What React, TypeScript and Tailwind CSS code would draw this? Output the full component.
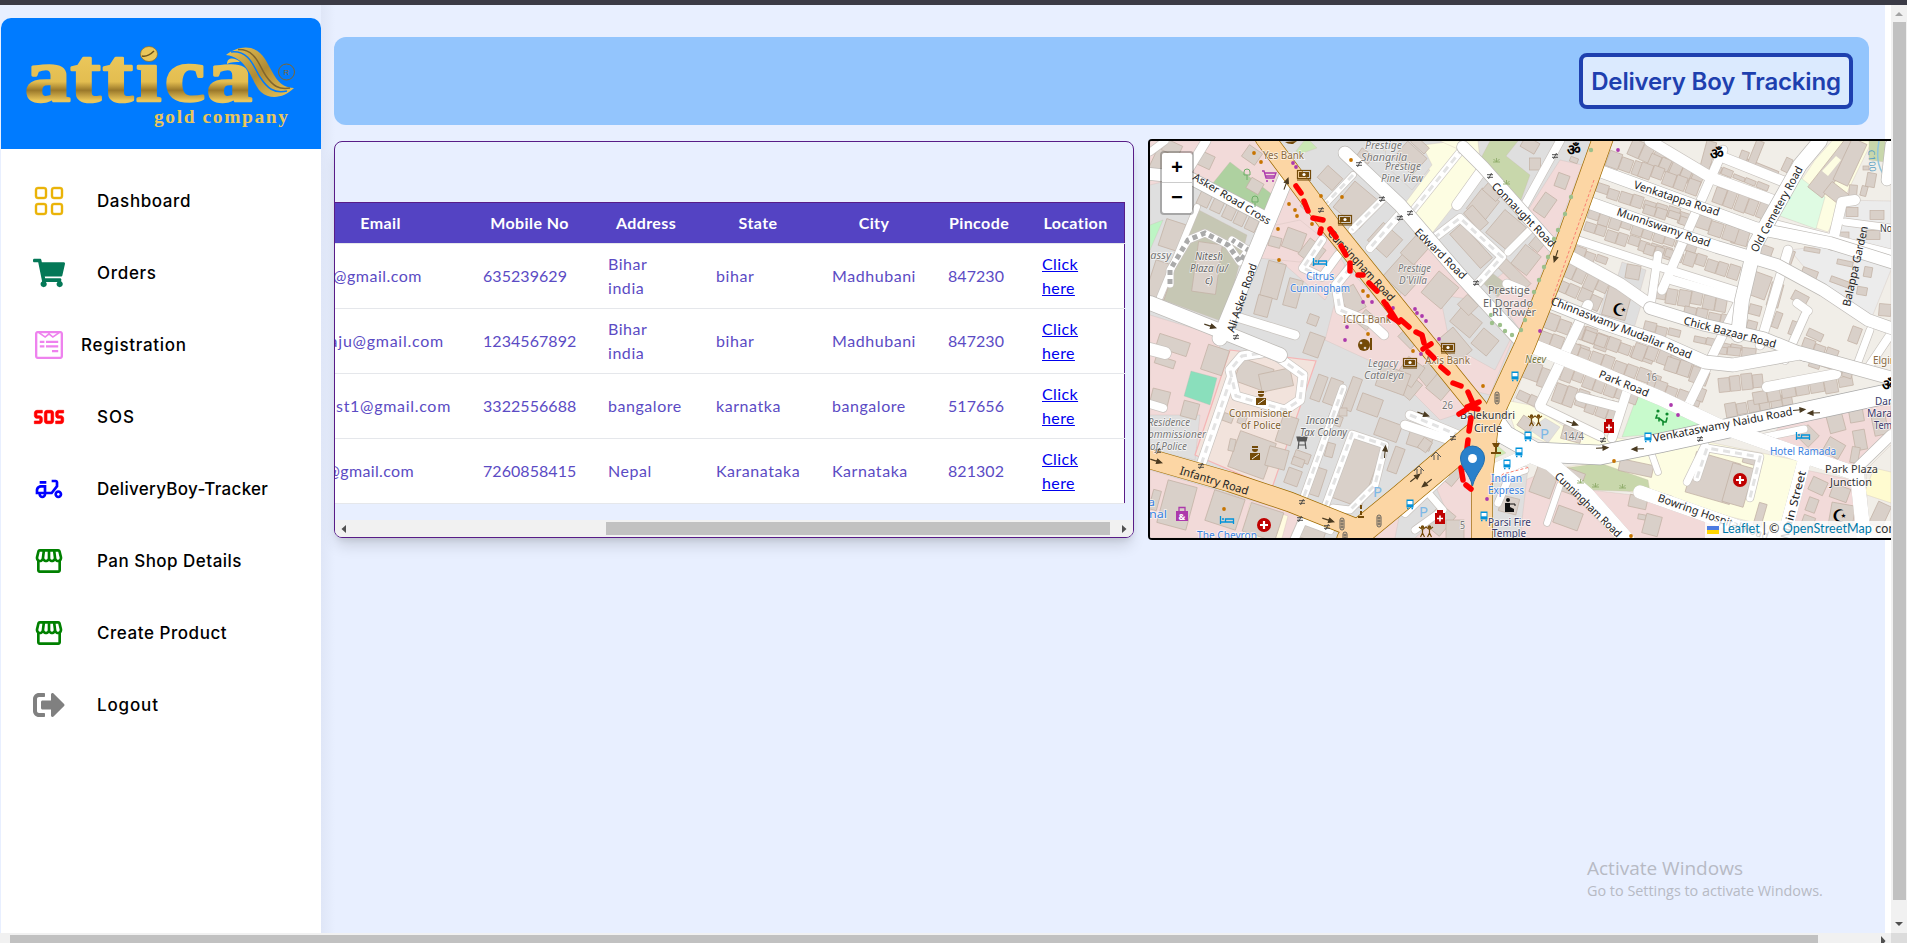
import type { ReactNode } from "react";
import { BsGrid } from "react-icons/bs";
import { FaShoppingCart, FaWpforms, FaSignOutAlt } from "react-icons/fa";
import { MdSos, MdOutlineDeliveryDining, MdOutlineStorefront } from "react-icons/md";

type Pt = [number, number];

/* ---------- Sidebar ---------- */

const menu: { label: string; icon: ReactNode; gap: string; track: string }[] = [
  { label: "Dashboard", icon: <BsGrid size={32} color="#eab308" stroke="#eab308" strokeWidth={0.2} />, gap: "gap-8", track: "tracking-[0.6px]" },
  { label: "Orders", icon: <FaShoppingCart size={32} color="#047857" />, gap: "gap-8", track: "tracking-[0.7px]" },
  { label: "Registration", icon: <FaWpforms size={32} color="violet" />, gap: "gap-4", track: "tracking-[0.7px]" },
  { label: "SOS", icon: <MdSos size={32} color="red" className="[&>path:last-child]:[stroke-width:0.5px] [&>path:last-child]:[stroke:red]" />, gap: "gap-8", track: "tracking-[1px]" },
  { label: "DeliveryBoy-Tracker", icon: <MdOutlineDeliveryDining size={32} color="blue" />, gap: "gap-8", track: "tracking-[0.3px]" },
  { label: "Pan Shop Details", icon: <MdOutlineStorefront size={32} color="green" />, gap: "gap-8", track: "tracking-[0.48px]" },
  { label: "Create Product", icon: <MdOutlineStorefront size={32} color="green" />, gap: "gap-8", track: "tracking-[0.55px]" },
  { label: "Logout", icon: <FaSignOutAlt size={32} color="gray" />, gap: "gap-8", track: "tracking-[0.85px]" },
];

function Logo() {
  return (
    <svg width="320" height="131" viewBox="1 18 320 131" className="block">
      <defs>
        <linearGradient id="gold" x1="0" y1="0" x2="0" y2="1">
          <stop offset="0.3" stopColor="#eac65a" />
          <stop offset="0.58" stopColor="#e3bd50" />
          <stop offset="0.68" stopColor="#9a782a" />
          <stop offset="0.8" stopColor="#eac65a" />
        </linearGradient>
        <linearGradient id="goldWave" x1="0" y1="0" x2="1" y2="1">
          <stop offset="0" stopColor="#eac65a" />
          <stop offset="0.5" stopColor="#b08b33" />
          <stop offset="1" stopColor="#eac65a" />
        </linearGradient>
      </defs>
      <g fontFamily="Liberation Serif, serif" fontWeight="700" fill="url(#gold)" stroke="url(#gold)" strokeWidth="2.600" strokeLinejoin="round">
        <text transform="translate(25 101) scale(1.18 1)" fontSize="77" x="0 38.500 66 94 118.500 154">attica</text>
      </g>
      <ellipse cx="149" cy="54" rx="8.500" ry="7.500" fill="#eac65a" stroke="#8a6a24" strokeWidth="0.700" />
      <path d="M142 56c5 1 9-2 12-5" stroke="#6c521b" strokeWidth="1.500" fill="none" />
      <path d="M226 55C239 45 256 44 265 59C274 74 278 88 294 88C284 98 270 100 261 92C251 82 249 58 226 55Z" fill="url(#goldWave)" />
      <path d="M231 52C250 50 254 68 260 77C267 88 274 94 287 91" fill="none" stroke="#007bff" strokeWidth="1.500" />
      <path d="M238 49.500C256 49 259 66 266 76C273 86 279 90 290 88" fill="none" stroke="#80662d" strokeWidth="1.500" />
      <path d="M227 64c0-8 9-6 13-2c-5 0-9 0-13 2Z" fill="#eac65a" />
      <circle cx="286.500" cy="72" r="8" fill="none" stroke="#80662d" />
      <text x="286.500" y="75" fontFamily="Liberation Sans, sans-serif" fontSize="8" fill="#80662d" textAnchor="middle">R</text>
      <text x="154" y="123" fontFamily="Liberation Serif, serif" fontWeight="700" fontSize="19.500" fill="#eac65a" textLength="134">gold company</text>
    </svg>
  );
}

function Sidebar() {
  return (
    <aside className="z-10 ml-px mt-[13px] flex w-80 shrink-0 flex-col overflow-hidden rounded-t-[10px] bg-white">
      <div className="h-[131px] shrink-0 bg-[#007bff]"><Logo /></div>
      <nav className="flex flex-col pt-4">
        {menu.map((m) => (
          <div key={m.label} className={"flex h-[72px] items-center pl-8 " + m.gap}>
            {m.icon}
            <span className={"whitespace-nowrap pt-[2px] font-['Inter',sans-serif] text-[17px] font-medium text-black " + m.track}>{m.label}</span>
          </div>
        ))}
      </nav>
    </aside>
  );
}

/* ---------- Table ---------- */

const cols = "grid grid-cols-[132px_125px_108px_116px_116px_94px_99px]";
const rows = [
  { email: "@gmail.com", pad: "pr-[45px] tracking-[0.5px]", cells: ["635239629", "Bihar india", "bihar", "Madhubani", "847230"] },
  { email: "aju@gmail.com", pad: "pr-[23px] tracking-[0.75px]", cells: ["1234567892", "Bihar india", "bihar", "Madhubani", "847230"] },
  { email: "st1@gmail.com", pad: "pr-4 tracking-[0.7px]", cells: ["3322556688", "bangalore", "karnatka", "bangalore", "517656"] },
  { email: "@gmail.com", pad: "pr-[53px] tracking-[0.35px]", cells: ["7260858415", "Nepal", "Karanataka", "Karnataka", "821302"] },
];

function TableCard() {
  return (
    <section className="flex h-[397px] w-[800px] shrink-0 flex-col overflow-hidden rounded-lg border border-[#581c87] pt-[60px] font-['Lato',sans-serif] text-base shadow-[0_10px_15px_-3px_rgba(0,0,0,0.14),0_4px_6px_-2px_rgba(0,0,0,0.08)]">
      <div className="w-[790px]">
        <div className={cols + " h-[41px] items-center border-r border-t border-[#581c87] bg-[#5443c3] text-center font-bold tracking-[0.4px] text-white"}>
          <span className="pr-[41px]">Email</span>
          <span>Mobile No</span>
          <span>Address</span>
          <span>State</span>
          <span>City</span>
          <span>Pincode</span>
          <span>Location</span>
        </div>
        {rows.map((r, i) => (
          <div key={i} className="border-t border-[#e5e7eb]">
            <div className={cols + " h-16 items-center border-r border-[#581c87] bg-white leading-6 text-[#5b4bc4]"}>
              <span className={"flex justify-end overflow-hidden whitespace-nowrap " + r.pad}>{r.email}</span>
              {r.cells.map((c, j) => (
                <span key={j} className={"px-4 " + (j === 0 || j === 4 ? "tracking-[0.05px]" : "tracking-[0.55px]") + (c === "Bihar india" ? " w-[72px]" : "")}>{c}</span>
              ))}
              <a className="block w-[72px] pl-4 tracking-[0.4px] text-[#0000ee] underline">Click here</a>
            </div>
          </div>
        ))}
        <div className="h-px bg-[#e5e7eb]" />
      </div>
      <div className="mt-auto flex h-[17px] items-center bg-[#f1f1f1] px-1.5">
        <svg width="5" height="8"><path d="M5 0v8L0.500 4z" fill="#505050" /></svg>
        <div className="ml-[260px] h-[13px] w-[504px] bg-[#c1c1c1]" />
        <svg width="5" height="8" className="ml-auto"><path d="M0 0v8l4.500-4z" fill="#505050" /></svg>
      </div>
    </section>
  );
}

/* ---------- Map ---------- */

const line = (pts: Pt[]) => "M" + pts.map((p) => p.join(" ")).join("L");

const areas: [string, Pt[]][] = [
  ["#dfdfdf", [[1150, 141], [1602, 141], [1500, 400], [1470, 538], [1150, 538]]],
  ["#f2dad9", [[1150, 141], [1262, 141], [1300, 190], [1266, 218], [1190, 175], [1150, 185]]],
  ["#f2dad9", [[1285, 180], [1320, 225], [1345, 265], [1325, 300], [1268, 250], [1262, 240]]],
  ["#f2dad9", [[1262, 228], [1300, 220], [1325, 240], [1300, 262], [1258, 258]]],
  ["#f2dad9", [[1345, 265], [1410, 335], [1470, 410], [1440, 420], [1390, 370], [1325, 340], [1338, 290]]],
  ["#f2dad9", [[1424, 240], [1513, 338], [1490, 395], [1470, 390], [1398, 300]]],
  ["#dfdfdf", [[1440, 295], [1475, 300], [1510, 340], [1495, 370], [1450, 345]]],
  ["#f2dad9", [[1560, 160], [1582, 165], [1520, 330], [1488, 285], [1545, 240], [1528, 210]]],
  ["#f2dad9", [[1150, 315], [1215, 335], [1230, 375], [1205, 450], [1150, 435]]],
  ["#dfdfdf", [[1150, 415], [1200, 415], [1195, 460], [1150, 450]]],
  ["#f2e3dc", [[1230, 350], [1316, 361], [1272, 488], [1195, 455]]],
  ["#f2dad9", [[1150, 470], [1300, 515], [1290, 538], [1150, 538]]],
  ["#fdfde2", [[1383, 150], [1455, 141], [1483, 168], [1430, 236], [1400, 210], [1430, 170]]],
  ["#fdfde2", [[1440, 141], [1478, 141], [1480, 160], [1460, 150]]],
  ["#dfdfdf", [[1386, 141], [1420, 141], [1432, 165], [1412, 190], [1385, 165]]],
  ["#c8d7ab", [[1490, 141], [1518, 141], [1506, 156], [1530, 175], [1521, 200], [1480, 160]]],
  ["#aed1a0", [[1230, 162], [1273, 195], [1265, 213], [1213, 183]]],
  ["#c9e8b4", [[1310, 141], [1317, 148], [1300, 154], [1296, 151], [1304, 141]]],
  ["#c6c7b4", [[1195, 208], [1247, 235], [1224, 322], [1163, 300]]],
  ["#c6c7b4", [[1483, 283], [1492, 273], [1508, 285], [1498, 297]]],
  ["#bdf5c4", [[1150, 225], [1163, 220], [1150, 250]]],
  ["#8adfbc", [[1191, 371], [1217, 378], [1210, 405], [1184, 396]]],
  ["#f1eee8", [[1612, 141], [1891, 141], [1891, 385], [1660, 435], [1600, 445], [1545, 440], [1510, 410], [1550, 300]]],
  ["#dfdfdf", [[1622, 262], [1646, 270], [1640, 292], [1616, 282]]],
  ["#dfdfdf", [[1606, 290], [1642, 302], [1634, 328], [1598, 318]]],
  ["#ececec", [[1790, 250], [1830, 245], [1840, 200], [1891, 201], [1891, 270], [1870, 322], [1823, 290]]],
  ["#fdfde2", [[1815, 160], [1832, 141], [1872, 141], [1828, 232], [1778, 215]]],
  ["#dffbe3", [[1801, 178], [1825, 197], [1816, 229], [1777, 215]]],
  ["#c8d7ab", [[1869, 141], [1885, 141], [1885, 162], [1869, 160]]],
  ["#fdfde2", [[1505, 400], [1530, 405], [1570, 430], [1630, 440], [1610, 450], [1560, 448], [1515, 430]]],
  ["#dfdfdf", [[1530, 430], [1545, 418], [1560, 427], [1548, 443]]],
  ["#c8facc", [[1637, 396], [1677, 408], [1716, 425], [1680, 432], [1622, 437]]],
  ["#fdfde2", [[1560, 468], [1663, 452], [1703, 441], [1805, 462], [1785, 530], [1640, 495]]],
  ["#c8d7ab", [[1566, 468], [1600, 463], [1648, 480], [1650, 492], [1590, 490]]],
  ["#f2dad9", [[1500, 490], [1550, 470], [1615, 538], [1495, 538]]],
  ["#dfdfdf", [[1492, 480], [1528, 468], [1520, 538], [1490, 538]]],
  ["#f2dad9", [[1590, 490], [1650, 497], [1765, 538], [1625, 538]]],
  ["#f2dad9", [[1780, 425], [1852, 400], [1891, 400], [1891, 440], [1855, 468], [1770, 440]]],
  ["#f2dad9", [[1806, 470], [1852, 480], [1860, 538], [1790, 538]]],
  ["#f1eee8", [[1866, 470], [1891, 445], [1891, 538], [1868, 538]]],
  ["#fffbd0", [[1874, 468], [1891, 472], [1891, 503], [1864, 494]]],
  ["#fffbe0", [[1250, 503], [1288, 516], [1282, 538], [1242, 538]]],
  ["#cdebb0", [[1491, 440], [1506, 453], [1491, 460]]],
  ["#f2dad9", [[1400, 500], [1470, 440], [1473, 538], [1370, 538], [1350, 535]]],
  ["#dfdfdf", [[1400, 512], [1435, 485], [1446, 510], [1415, 538], [1395, 538]]],
];

/* cx, cy, width, height, angle */
const buildings: [number, number, number, number, number][] = [
  [1205, 160, 16, 14, 25], [1252, 155, 16, 14, 35], [1160, 160, 14, 24, 25], [1172, 148, 18, 12, 25],
  [1255, 186, 14, 12, 30], [1172, 235, 20, 28, 18], [1160, 280, 20, 36, 18],
  [1205, 198, 12, 17, 25], [1218, 204, 11, 17, 25], [1230, 211, 11, 17, 25], [1241, 217, 10, 17, 25], [1252, 224, 11, 14, 25],
  [1207, 268, 24, 50, 8], [1273, 280, 18, 36, 15], [1293, 293, 14, 28, 15], [1263, 306, 14, 20, 15],
  [1294, 240, 20, 20, 20], [1312, 252, 20, 20, 38], [1275, 242, 12, 10, 15], [1310, 205, 14, 14, 40],
  [1357, 205, 34, 34, 40], [1330, 178, 20, 16, 42], [1365, 156, 14, 10, 35], [1385, 240, 26, 24, 42],
  [1313, 320, 10, 10, 20], [1314, 345, 16, 22, 20], [1352, 300, 18, 26, -30], [1366, 320, 14, 16, 40],
  [1410, 158, 26, 22, 42], [1404, 275, 30, 30, 42], [1415, 250, 18, 24, 42], [1420, 145, 18, 8, 42],
  [1483, 205, 22, 26, 38], [1476, 218, 24, 12, 48], [1493, 191, 18, 12, 42], [1506, 230, 28, 30, 40],
  [1471, 246, 46, 16, 48], [1526, 260, 20, 24, 38], [1514, 275, 36, 12, 45], [1537, 244, 12, 12, 40],
  [1440, 290, 28, 26, -50], [1466, 322, 26, 20, 40], [1468, 305, 16, 14, 45], [1485, 342, 20, 20, 40],
  [1562, 181, 12, 14, 20], [1545, 205, 14, 22, 35], [1535, 164, 11, 12, 0], [1530, 145, 16, 12, 30], [1574, 160, 8, 5, 20],
  [1412, 335, 22, 18, -45], [1430, 372, 24, 18, -40], [1407, 385, 24, 20, 40], [1441, 385, 20, 24, 40], [1455, 345, 20, 30, -40],
  [1420, 440, 24, 16, 18], [1410, 372, 20, 24, 35],
  [1173, 345, 32, 14, 18], [1165, 362, 20, 8, 18], [1215, 360, 22, 26, 18], [1160, 398, 18, 16, 14], [1190, 410, 16, 16, 15],
  [1254, 375, 34, 24, 20], [1276, 380, 32, 18, -12], [1287, 430, 16, 28, 18], [1252, 455, 38, 38, 20], [1277, 458, 20, 20, 15], [1232, 445, 6, 12, 12], [1228, 418, 10, 8, 20], [1242, 420, 8, 8, 20],
  [1319, 388, 10, 26, 20], [1333, 392, 13, 26, 20], [1352, 394, 10, 34, 20], [1343, 412, 8, 8, 0], [1302, 457, 16, 10, 20], [1330, 450, 8, 14, 15], [1293, 477, 14, 16, 20], [1318, 482, 10, 28, 18], [1298, 462, 12, 8, 20], [1335, 420, 14, 10, 20],
  [1356, 472, 34, 64, 20], [1370, 405, 22, 18, 20], [1388, 430, 24, 18, 20], [1393, 380, 30, 22, 20], [1396, 460, 10, 26, 20],
  [1177, 505, 30, 44, 15], [1225, 510, 32, 32, 18], [1263, 522, 34, 30, 18], [1155, 500, 8, 20, 15], [1310, 532, 30, 16, 18],
  [1455, 470, 16, 30, 40], [1440, 520, 20, 26, 40], [1425, 445, 10, 12, 35], [1455, 530, 18, 20, 0],
  [1544, 482, 22, 28, 20], [1572, 482, 20, 24, 20], [1568, 518, 26, 18, 20], [1509, 505, 18, 16, 14], [1526, 424, 14, 12, 35], [1572, 434, 20, 14, 15],
  [1636, 468, 34, 12, 12], [1638, 502, 18, 12, 12], [1642, 517, 8, 5, 10], [1652, 525, 16, 20, 15],
  [1713, 478, 46, 42, 16], [1738, 485, 22, 40, 16], [1760, 515, 8, 24, 16], [1750, 460, 14, 8, 15],
  [1818, 486, 16, 14, 25], [1840, 493, 18, 14, 20], [1812, 505, 10, 14, 20], [1842, 515, 24, 22, 10], [1808, 522, 12, 12, 20], [1880, 515, 14, 24, 25],
  [1808, 436, 16, 16, 45], [1836, 423, 16, 18, -15], [1856, 413, 14, 18, -10], [1834, 448, 18, 16, 30], [1860, 440, 12, 20, -10], [1855, 455, 8, 16, 10], [1880, 425, 14, 20, -12],
  [1834, 168, 18, 62, 38], [1850, 162, 16, 46, 25], [1838, 195, 26, 14, 38], [1853, 191, 8, 12, 5], [1864, 191, 6, 10, 15], [1871, 180, 9, 14, 10], [1866, 168, 6, 4, 0],
  [1762, 168, 34, 6, 22], [1755, 155, 8, 30, 22], [1787, 165, 7, 14, 25], [1744, 156, 8, 10, 20],
  [1758, 285, 22, 24, 20], [1775, 295, 12, 24, 15], [1741, 235, 16, 20, 15], [1766, 252, 12, 12, 20], [1789, 258, 8, 16, 20],
  [1809, 275, 16, 12, 20], [1812, 250, 16, 4, 10], [1840, 282, 20, 6, 20], [1852, 212, 12, 9, 0], [1877, 215, 14, 9, 0], [1843, 236, 12, 8, 0], [1873, 235, 14, 9, 0], [1862, 291, 10, 8, 10], [1845, 263, 16, 5, 12], [1868, 272, 8, 10, 10], [1885, 310, 12, 12, 5],
  [1800, 298, 16, 10, 28], [1755, 310, 12, 10, 15], [1752, 325, 10, 8, 15], [1777, 320, 7, 16, 20], [1793, 328, 6, 14, 20], [1815, 335, 16, 8, 25], [1855, 335, 10, 16, 20],
  [1617, 303, 24, 30, 15], [1633, 272, 14, 14, 10], [1708, 156, 10, 30, 15],
];

/* Runs of adjoining houses: start, step angle, count, size */
const terraces: { x: number; y: number; a: number; n: number; w: number; h: number }[] = [
  { x: 1614, y: 160, a: 20, n: 3, w: 13, h: 16 }, { x: 1636, y: 148, a: 24, n: 6, w: 12, h: 18 }, { x: 1655, y: 160, a: 24, n: 5, w: 11, h: 14 },
  { x: 1602, y: 190, a: 18, n: 8, w: 12, h: 12 }, { x: 1646, y: 170, a: 20, n: 5, w: 12, h: 15 }, { x: 1650, y: 209, a: 18, n: 4, w: 12, h: 10 },
  { x: 1594, y: 214, a: 18, n: 10, w: 11, h: 15 }, { x: 1590, y: 228, a: 18, n: 9, w: 11, h: 12 }, { x: 1650, y: 248, a: 18, n: 3, w: 10, h: 10 },
  { x: 1580, y: 252, a: 20, n: 3, w: 11, h: 10 }, { x: 1569, y: 270, a: 24, n: 4, w: 12, h: 18 }, { x: 1562, y: 286, a: 24, n: 4, w: 12, h: 14 },
  { x: 1552, y: 322, a: 20, n: 5, w: 13, h: 16 }, { x: 1545, y: 337, a: 20, n: 4, w: 13, h: 12 }, { x: 1590, y: 336, a: 20, n: 6, w: 12, h: 13 },
  { x: 1573, y: 350, a: 20, n: 8, w: 12, h: 14 }, { x: 1568, y: 372, a: 20, n: 7, w: 11, h: 18 }, { x: 1560, y: 392, a: 20, n: 6, w: 11, h: 20 },
  { x: 1532, y: 372, a: 20, n: 2, w: 16, h: 20 }, { x: 1523, y: 397, a: 25, n: 2, w: 12, h: 12 }, { x: 1640, y: 350, a: 20, n: 5, w: 12, h: 16 },
  { x: 1660, y: 388, a: 20, n: 4, w: 12, h: 14 }, { x: 1672, y: 365, a: 18, n: 3, w: 13, h: 16 },
  { x: 1700, y: 394, a: 20, n: 1, w: 10, h: 16 }, { x: 1703, y: 378, a: 20, n: 1, w: 10, h: 14 },
  { x: 1716, y: 168, a: 22, n: 5, w: 12, h: 7 }, { x: 1720, y: 195, a: 20, n: 5, w: 11, h: 18 }, { x: 1703, y: 224, a: 18, n: 3, w: 14, h: 16 },
  { x: 1690, y: 258, a: 18, n: 5, w: 11, h: 14 }, { x: 1686, y: 277, a: 16, n: 5, w: 12, h: 9 }, { x: 1660, y: 293, a: 10, n: 6, w: 12, h: 16 },
  { x: 1690, y: 312, a: 12, n: 4, w: 12, h: 12 }, { x: 1776, y: 232, a: 14, n: 5, w: 9, h: 5 }, { x: 1650, y: 327, a: 14, n: 3, w: 12, h: 10 }, { x: 1700, y: 340, a: 12, n: 4, w: 12, h: 8 },
  { x: 1720, y: 350, a: 6, n: 3, w: 14, h: 10 }, { x: 1731, y: 410, a: -10, n: 6, w: 11, h: 14 }, { x: 1760, y: 397, a: -10, n: 7, w: 14, h: 13 },
  { x: 1724, y: 384, a: -6, n: 4, w: 11, h: 16 }, { x: 1808, y: 346, a: 20, n: 3, w: 12, h: 14 }, { x: 1815, y: 363, a: 18, n: 4, w: 11, h: 8 },
];

const minor: [number, Pt[]][] = [
  [6, [[1160, 297], [1197, 207]]], [9, [[1187, 172], [1206, 141]]], [7, [[1150, 152], [1165, 141]]],
  [6, [[1353, 175], [1318, 212]]], [7, [[1387, 195], [1352, 230]]], [8, [[1400, 214], [1370, 248]]],
  [7, [[1463, 148], [1411, 213]]], [10, [[1482, 170], [1457, 205]]], [8, [[1560, 141], [1522, 210]]],
  [8, [[1434, 238], [1460, 218], [1502, 257], [1474, 288]]], [7, [[1530, 230], [1508, 252]]], [9, [[1507, 284], [1522, 290]]],
  [8, [[1322, 240], [1303, 268], [1322, 277], [1338, 255]]], [9, [[1350, 268], [1336, 285], [1340, 310], [1370, 322], [1384, 335]]],
  [9, [[1240, 318], [1295, 335]]], [7, [[1170, 284], [1170, 270], [1188, 240], [1205, 233], [1228, 245], [1240, 262], [1248, 250], [1232, 240]]],
  [9, [[1225, 335], [1278, 357], [1303, 375], [1300, 400], [1285, 410], [1236, 396], [1230, 370], [1242, 356], [1262, 353]]],
  [9, [[1231, 378], [1201, 465]]], [7, [[1343, 388], [1302, 502]]], [7, [[1325, 507], [1352, 434], [1385, 445], [1375, 485], [1350, 510], [1333, 508]]],
  [12, [[1150, 349], [1165, 353]]], [8, [[1150, 404], [1163, 408]]], [9, [[1410, 415], [1470, 440]]], [9, [[1405, 425], [1450, 440]]],
  [8, [[1405, 513], [1445, 475]]], [8, [[1295, 538], [1303, 520], [1330, 530]]], [7, [[1430, 495], [1443, 510], [1415, 530]]],
  [8, [[1577, 240], [1660, 267], [1740, 292]]], [12, [[1567, 255], [1620, 284], [1650, 305]]], [9, [[1723, 150], [1662, 290]]],
  [8, [[1658, 255], [1650, 310]]], [9, [[1672, 280], [1742, 300]]], [11, [[1650, 141], [1712, 178], [1772, 200]]], [10, [[1717, 155], [1790, 184]]],
  [10, [[1855, 200], [1842, 202], [1832, 245]]], [9, [[1765, 222], [1891, 254]]], [7, [[1845, 222], [1891, 228]]], [8, [[1797, 303], [1808, 311]]],
  [9, [[1788, 250], [1760, 345]]], [8, [[1805, 315], [1785, 360]]], [9, [[1742, 295], [1685, 412]]], [7, [[1870, 330], [1855, 370]]], [8, [[1890, 335], [1870, 365]]],
  [10, [[1588, 305], [1540, 405]]], [9, [[1540, 407], [1600, 436]]], [9, [[1628, 388], [1612, 438]]], [9, [[1580, 397], [1618, 407]]],
  [10, [[1767, 387], [1836, 374]]], [7, [[1705, 445], [1687, 482]]], [7, [[1697, 478], [1707, 448], [1760, 457], [1750, 498]]],
  [6, [[1658, 472], [1652, 455]]], [6, [[1560, 485], [1547, 523]]], [7, [[1498, 503], [1510, 475], [1525, 470]]], [7, [[1765, 437], [1804, 429]]], [8, [[1645, 493], [1670, 500]]],
];

const streets: [number, Pt[]][] = [
  [14, [[1150, 303], [1228, 334], [1280, 355]]], [15, [[1290, 168], [1220, 338]]], [12, [[1150, 174], [1190, 178], [1270, 220]]],
  [13, [[1345, 153], [1400, 205], [1460, 275], [1518, 338]]], [12, [[1463, 147], [1483, 167], [1553, 246]]],
  [12, [[1597, 170], [1660, 193], [1755, 228], [1830, 243], [1891, 262]]], [12, [[1587, 202], [1660, 228], [1717, 247], [1777, 265], [1823, 290], [1868, 320], [1891, 328]]],
  [13, [[1550, 302], [1600, 322], [1660, 342], [1705, 362], [1733, 365], [1800, 353], [1891, 378]]], [12, [[1650, 308], [1705, 325], [1763, 338], [1805, 355]]],
  [14, [[1820, 141], [1800, 165], [1755, 245], [1742, 300], [1738, 335]]], [13, [[1530, 345], [1600, 373], [1660, 398], [1717, 425], [1810, 458], [1857, 474], [1864, 538]]],
  [14, [[1497, 470], [1530, 455], [1550, 463], [1587, 495], [1627, 540]]], [12, [[1640, 492], [1770, 538]]], [12, [[1804, 462], [1783, 540]]], [10, [[1855, 470], [1891, 435]]],
  [11, [[1891, 145], [1887, 180]]],
];

const naidu: Pt[] = [[1490, 415], [1505, 435], [1535, 452], [1600, 455], [1660, 443], [1891, 393]];

const arterials: [number, Pt[]][] = [
  [19, [[1265, 138], [1330, 225], [1393, 303], [1478, 408]]],
  [19, [[1150, 459], [1230, 482], [1290, 502], [1355, 528]]],
  [26, [[1350, 540], [1400, 499], [1482, 430]]],
  [20, [[1603, 138], [1565, 245], [1525, 345], [1488, 425], [1482, 480], [1482, 540]]],
];

/* start, end, caption, font size */
const roadNames: [number, number, number, number, string, number][] = [
  [1192, 179, 1268, 225, "Asker Road Cross", 10.500], [1234, 333, 1257, 265, "Ali Asker Road", 11], [1327, 234, 1390, 302, "Cunningham Road", 11],
  [1491, 187, 1551, 248, "Connaught Road", 11], [1414, 233, 1462, 280, "Edward Road", 11], [1550, 304, 1690, 359, "Chinnaswamy Mudaliar Road", 11],
  [1633, 188, 1718, 216, "Venkatappa Road", 11], [1616, 215, 1709, 247, "Munniswamy Road", 11], [1683, 324, 1775, 348, "Chick Bazaar Road", 11],
  [1757, 253, 1803, 169, "Old Cemetery Road", 11], [1850, 307, 1868, 227, "Balappa Garden", 11], [1598, 377, 1647, 397, "Park Road", 11],
  [1654, 442, 1793, 415, "Venkataswamy Naidu Road", 11], [1179, 474, 1247, 495, "Infantry Road", 11.500], [1554, 477, 1617, 538, "Cunningham Road", 11],
  [1657, 501, 1767, 540, "Bowring Hospital Road", 11], [1788, 540, 1806, 472, "Main Street", 11],
];

/* x, baseline, width, caption, colour, italic */
const places: [number, number, number, string, string, boolean][] = [
  [1263, 159, 41, "Yes Bank", "#8a6a3f", false], [1365, 149, 37, "Prestige", "#777", true], [1361, 161, 46, "Shangrila", "#777", true],
  [1385, 170, 36, "Prestige", "#777", true], [1381, 182, 42, "Pine View", "#777", true], [1195, 260, 28, "Nitesh", "#666", true], [1190, 272, 38, "Plaza (u/", "#666", true], [1205, 284, 8, "c)", "#666", true],
  [1144, 259, 27, "bassy", "#777", true], [1306, 280, 28, "Citrus", "#3b82e0", false], [1290, 292, 60, "Cunningham", "#3b82e0", false], [1343, 323, 48, "ICICI Bank", "#8a6a3f", false],
  [1398, 272, 33, "Prestige", "#777", true], [1399, 284, 28, "D'Villa", "#777", true], [1488, 294, 42, "Prestige", "#666", false], [1483, 307, 50, "El Dorado", "#666", false], [1492, 316, 44, "RI Tower", "#666", false],
  [1368, 367, 30, "Legacy", "#777", true], [1364, 379, 40, "Cataleya", "#777", true], [1425, 364, 45, "Axis Bank", "#8a6a3f", false], [1525, 363, 21, "Neev", "#76763e", true],
  [1229, 417, 63, "Commisioner", "#80602e", false], [1241, 429, 40, "of Police", "#80602e", false], [1306, 424, 33, "Income", "#666", true], [1300, 436, 47, "Tax Colony", "#666", true],
  [1148, 426, 42, "Residence", "#777", true], [1142, 438, 64, "Commissioner", "#777", true], [1150, 450, 37, "of Police", "#777", true],
  [1460, 419, 55, "Balekundri", "#333", false], [1474, 432, 28, "Circle", "#333", false], [1442, 409, 11, "26", "#777", false], [1563, 440, 21, "14/4", "#777", false], [1646, 381, 11, "16", "#777", false],
  [1491, 482, 31, "Indian", "#3b82e0", false], [1488, 494, 36, "Express", "#3b82e0", false], [1488, 526, 43, "Parsi Fire", "#39396b", false], [1492, 537, 34, "Temple", "#39396b", false], [1460, 529, 5, "5", "#777", false],
  [1770, 455, 66, "Hotel Ramada", "#3b82e0", false], [1825, 473, 53, "Park Plaza", "#333", false], [1830, 486, 42, "Junction", "#333", false],
  [1197, 539, 60, "The Chevron", "#3b82e0", false], [1138, 518, 29, "ional", "#3b82e0", false], [1148, 506, 7, "a", "#3b82e0", false],
  [1873, 364, 23, "Elgin", "#8a6a3f", false], [1875, 405, 17, "Dar", "#39396b", false], [1867, 417, 25, "Mara", "#39396b", false], [1874, 429, 18, "Tem", "#39396b", false], [1880, 232, 12, "No", "#333", false],
];

const routes: Pt[][] = [
  [[1296, 186], [1301, 193]], [[1304, 201], [1308, 211]], [[1313, 218], [1323, 220]], [[1321, 229], [1320, 233]], [[1330, 229], [1336, 237]],
  [[1341, 246], [1346, 255]], [[1350, 263], [1350, 271]], [[1358, 275], [1363, 275]], [[1369, 283], [1377, 291]], [[1384, 302], [1390, 311], [1386, 304], [1395, 318]], [[1390, 316], [1399, 322]],
  [[1401, 320], [1409, 327]], [[1416, 332], [1422, 335], [1424, 343]], [[1423, 349], [1431, 344]], [[1428, 352], [1434, 358]], [[1441, 367], [1448, 373]], [[1453, 383], [1461, 386]],
  [[1468, 392], [1475, 408]], [[1459, 414], [1479, 402], [1467, 407], [1478, 409]], [[1471, 418], [1469, 431]], [[1468, 440], [1467, 448]], [[1461, 468], [1463, 480]], [[1466, 485], [1471, 489]],
];

const dots: [number, number, string][] = [
  [1254, 153, "o"], [1261, 162, "o"], [1293, 163, "p"], [1296, 167, "p"], [1321, 196, "o"], [1342, 197, "o"], [1289, 204, "o"], [1295, 210, "o"], [1297, 216, "o"], [1312, 224, "o"], [1278, 229, "o"], [1279, 260, "o"], [1351, 160, "o"],
  [1363, 291, "o"], [1368, 296, "o"], [1363, 302, "p"], [1372, 302, "p"], [1393, 308, "p"], [1347, 327, "p"], [1368, 334, "o"], [1345, 340, "p"], [1415, 309, "p"], [1417, 313, "p"], [1422, 316, "p"], [1426, 321, "p"], [1439, 339, "p"], [1413, 351, "o"], [1421, 354, "p"], [1483, 386, "o"],
  [1618, 150, "p"], [1540, 331, "p"], [1487, 499, "p"], [1614, 461, "o"], [1671, 405, "p"], [1678, 415, "p"], [1224, 509, "o"], [1631, 536, "o"],
];
const trees: Pt[] = [[1591, 150], [1571, 197], [1565, 214], [1558, 230], [1554, 239], [1548, 257], [1544, 267], [1539, 280], [1534, 292], [1525, 320], [1521, 330], [1491, 315], [1492, 323], [1500, 325], [1505, 331], [1512, 335]];
const gates: Pt[] = [[1359, 164], [1382, 199], [1321, 210], [1400, 218], [1410, 213], [1490, 176], [1555, 156], [1476, 283], [1236, 337], [1158, 451], [1201, 466], [1302, 502], [1300, 519], [1327, 527], [1453, 438], [1603, 440], [1700, 439]];
const buses: Pt[] = [[1515, 376], [1528, 436], [1519, 452], [1507, 464], [1484, 516], [1410, 504], [1648, 437]];
const cashpoints: Pt[] = [[1304, 175], [1345, 220], [1448, 348], [1410, 363]];
const lights: Pt[] = [[1497, 398], [1342, 524], [1379, 521], [1345, 538]];
/* x, y, angle */
const arrows: [number, number, number][] = [[1286, 184, -70], [1210, 326, 18], [1556, 256, 108], [1156, 461, 18], [1328, 520, 18], [1385, 452, -85], [1423, 414, 20], [1415, 478, -38], [1427, 483, 142], [1572, 423, 20], [1602, 448, -3], [1638, 449, 178], [1799, 410, -5], [1814, 413, 178]];

function RoadSet({ roads, color, casing }: { roads: [number, Pt[]][]; color: string; casing: string }) {
  return (
    <g fill="none" strokeLinecap="round" strokeLinejoin="round">
      {roads.map(([w, p], i) => <path key={"c" + i} d={line(p)} stroke={casing} strokeWidth={w + 1.400} />)}
      {roads.map(([w, p], i) => <path key={"r" + i} d={line(p)} stroke={color} strokeWidth={w} />)}
    </g>
  );
}

function Officer({ x, y }: { x: number; y: number }) {
  return (
    <g transform={`translate(${x} ${y})`} fill="#734a08">
      <path d="M-3-7h6v2h-6zM-3-4h6a3 3 0 0 1-6 0zM-5 0h10v7h-10z" />
      <path d="M-3 6L4 1" stroke="#fff" strokeWidth="0.900" />
    </g>
  );
}

function Medical({ x, y }: { x: number; y: number }) {
  return <g transform={`translate(${x} ${y})`}><circle r="7" fill="#bf0000" /><path d="M-4 0H4M0-4V4" stroke="#fff" strokeWidth="2.200" /></g>;
}

function Pharmacy({ x, y }: { x: number; y: number }) {
  return <g transform={`translate(${x} ${y})`}><path d="M-3-7h6v3h2v11h-10v-11h2z" fill="#bf0000" /><path d="M-3 1.500H3M0-1.500V4.500" stroke="#fff" strokeWidth="1.600" /></g>;
}

function People({ x, y }: { x: number; y: number }) {
  return <g transform={`translate(${x} ${y})`} stroke="#734a08" fill="#734a08" strokeWidth="1.200"><circle cx="-3.500" cy="-4" r="1.100" /><circle cx="3.500" cy="-4" r="1.100" /><path d="M-7-4L-3.500-1.500L0-4L3.500-1.500L7-4M-3.500-1.500V2L-5.500 6M-3.500 2L-1.500 6M3.500-1.500V2L1.500 6M3.500 2L5.500 6" fill="none" /></g>;
}

function Bed({ x, y }: { x: number; y: number }) {
  return <path transform={`translate(${x} ${y})`} d="M-6.500-4V4M-6.500 2H6.500V4M6.500 2V-1H-1.500V1.500M-5-1h2" stroke="#0092da" strokeWidth="1.300" fill="none" />;
}

function CityMap() {
  return (
    <svg width="741" height="397" viewBox="1150 141 741 397" className="block" fontFamily="Noto Sans, sans-serif">
      <rect x="1150" y="141" width="741" height="397" fill="#f1eee8" />
      {areas.map(([c, p], i) => <path key={i} d={line(p) + "Z"} fill={c} stroke={c === "#f2e3dc" ? "#f5b5b5" : "#c8b8b0"} strokeWidth={c === "#f2e3dc" ? 1.200 : 0.300} />)}
      <g fill="#d9d0c9" stroke="#c2b1a4" strokeWidth="0.700">
        {buildings.map(([x, y, w, h, a], i) => <rect key={i} x={x - w / 2} y={y - h / 2} width={w} height={h} transform={`rotate(${a} ${x} ${y})`} />)}
        {terraces.map((t, i) => (
          <g key={i} transform={`translate(${t.x} ${t.y}) rotate(${t.a})`}>
            {Array.from({ length: t.n }, (_, k) => <rect key={k} x={k * (t.w + 0.500) - t.w / 2} y={-t.h / 2 + ((k * 5 + i) % 3)} width={t.w - (k % 2)} height={t.h - ((k * 3 + i) % 4)} />)}
          </g>
        ))}
      </g>
      <path d="M1836 156l5 4l-13 16l-6-5z" fill="#fdfde2" />
      <path d="M1879 141c-3 16-2 30 12 42" stroke="#8fc4dc" strokeWidth="1.500" fill="none" />
      <RoadSet roads={minor} color="#fff" casing="#c9c4bf" />
      <g fill="none" stroke="#e3e3e3" strokeWidth="3" strokeDasharray="7 5">
        <path d="M1463 148L1411 213M1353 175L1318 212M1387 195L1352 230M1400 214L1370 248M1434 238L1460 218L1502 257L1474 288M1322 240L1303 268L1322 277" />
        <path d="M1231 378L1201 465M1343 388L1302 502M1325 507L1352 434L1385 445L1375 485L1350 510M1278 357L1303 375L1300 400L1285 410L1236 396L1230 370L1242 356L1262 353M1697 478L1707 448L1760 457L1750 498M1410 415L1470 440M1350 268L1336 285L1340 310L1370 322" />
        <path d="M1170 284L1170 270L1188 240L1205 233L1228 245L1240 262L1248 250L1232 240" stroke="#aaa" strokeWidth="5" strokeDasharray="5 4" />
      </g>
      <RoadSet roads={streets} color="#fff" casing="#bdbab6" />
      <RoadSet roads={[[19, naidu]]} color="#fff" casing="#a9a9a9" />
      <RoadSet roads={streets.slice(10, 14)} color="#fff" casing="#fff" />
      <RoadSet roads={arterials} color="#fcd6a4" casing="#a06b00" />
      <path d="M1594 180L1552 300M1490 485L1503 474L1530 467" stroke="#fa8072" strokeWidth="1" strokeDasharray="3 2" fill="none" />
      {trees.map(([x, y], i) => <circle key={i} cx={x} cy={y} r="2.200" fill="#9dc08b" />)}
      {dots.map(([x, y, k], i) => <circle key={i} cx={x} cy={y} r="1.900" fill={k === "o" ? "#c77400" : "#ac39ac"} />)}
      {gates.map(([x, y], i) => <path key={i} d={`M${x - 3} ${y - 1.300}h6M${x - 3} ${y + 1.300}h6M${x - 1.500} ${y + 3}l3-6`} stroke="#3f3f3f" strokeWidth="0.900" />)}
      {buses.map(([x, y], i) => (
        <g key={i} transform={`translate(${x} ${y})`}><path d="M-3.500-4.500h7v8h-7zM-3 3v2.200h1.500v-1.500h3v1.500h1.500v-2" fill="#0092da" /><rect x="-2.500" y="-3" width="5" height="3.300" fill="#fff" /></g>
      ))}
      {cashpoints.map(([x, y], i) => (
        <g key={i} transform={`translate(${x} ${y})`}><rect x="-6.500" y="-4.500" width="13" height="8" fill="none" stroke="#734a08" strokeWidth="1.200" /><rect x="-5" y="-3" width="10" height="5" fill="#734a08" /><circle cy="-0.500" r="1.600" fill="#fff" /><path d="M-7 5H7" stroke="#734a08" /></g>
      ))}
      {lights.map(([x, y], i) => (
        <g key={i} fill="none" stroke="#545454" strokeWidth="0.900"><rect x={x - 2} y={y - 6} width="4" height="12" rx="2" /><circle cx={x} cy={y - 3} r="1" /><circle cx={x} cy={y} r="1" /><circle cx={x} cy={y + 3} r="1" /></g>
      ))}
      {arrows.map(([x, y, a], i) => <path key={i} transform={`translate(${x} ${y}) rotate(${a})`} d="M-6 0H2M1-2.200L6 0L1 2.200z" stroke="#4a3a20" fill="#4a3a20" strokeWidth="1.100" />)}
      <path d="M1262 171h2l2 7h8l2-5h-11M1265 176h10" stroke="#ac39ac" strokeWidth="1.300" fill="none" />
      <circle cx="1267" cy="181" r="1" fill="#ac39ac" /><circle cx="1273" cy="181" r="1" fill="#ac39ac" />
      <path d="M1285 142a8 4 0 0 0 8 2l4-3z" fill="#734a08" />
      <g fill="none" stroke="#6fae69" strokeWidth="1"><path d="M1247 180v-5m-3-3a3 3 0 1 1 6 0v3h-6zM1255 207v-4m-3-4a3 3 0 1 1 6 0v3h-6z" /></g>
      <g stroke="#8fac6a" strokeWidth="0.900" fill="none"><path d="M1493 162h7m-3.500 0v-4m-3 1l3 3l3-3M1503 184h7m-3.500 0v-4m-3 1l3 3l3-3M1577 483h7m-3.500 0v-4m-3 1l3 3l3-3M1619 488h7m-3.500 0v-4m-3 1l3 3l3-3M1592 487h7m-3.500 0v-4m-3 1l3 3l3-3" /></g>
      <g stroke="#555" strokeWidth="1" fill="none"><path d="M1431 457l5-5l5 5M1434 455v5M1438 455v5M1414 471l5-5l5 5M1417 469v5M1421 469v5" /></g>
      <path d="M1297 437h10l-1 4h-8zM1299 441l-1 8M1305 441l1 8M1299 445h6" stroke="#555" fill="#555" strokeWidth="1.200" />
      <path d="M1492 443h8l-2 4h-4zM1495 447h2v5h-2zM1491 452h10v2h-10z" fill="#734a08" />
      <path d="M1361 505v4M1361 511v4M1358 517h6" stroke="#734a08" strokeWidth="2" />
      <circle cx="1364" cy="345" r="6" fill="#734a08" /><circle cx="1361" cy="343" r="1.300" fill="#d9d0c9" /><circle cx="1365" cy="348" r="1.300" fill="#d9d0c9" /><path d="M1371 350v-12" stroke="#734a08" strokeWidth="2" />
      <Officer x={1261} y={398} /><Officer x={1255} y={453} />
      <Medical x={1264} y={525} /><Medical x={1740} y={480} />
      <Pharmacy x={1609} y={426} /><Pharmacy x={1440} y={517} />
      <People x={1535} y={420} /><People x={1426} y={531} />
      <Bed x={1320} y={262} /><Bed x={1227} y={520} /><Bed x={1803} y={436} />
      <path d="M1176 511h12v10h-12z" fill="#ac39ac" /><path d="M1179 511v-3.500h6v3.500" fill="none" stroke="#ac39ac" strokeWidth="1.300" />
      <text x="1182" y="520" textAnchor="middle" fontSize="9" fontWeight="700" fill="#fff">&amp;</text>
      <g fontSize="15" fill="#7db8e6"><text x="1373" y="497">P</text><text x="1540" y="439">P</text><text x="1419" y="517">P</text></g>
      <g transform="translate(1509 505)" fill="#111"><circle cx="-1" cy="-5" r="2" /><path d="M-4-2h5v4l4 2v3h-9z" /><path d="M0-1h6v2" stroke="#111" fill="none" /></g>
      <g stroke="#0d8a2d" strokeWidth="1.600" fill="none" strokeLinecap="round"><circle cx="1658" cy="411" r="0.800" /><circle cx="1667" cy="414" r="0.800" /><path d="M1657 415l-1 3h3v3M1667 418l-1 4h-3v3M1660 419l4 3" /></g>
      <g fill="#000" fontFamily="DejaVu Sans, sans-serif" fontSize="17"><text x="1612" y="316">☪</text><text x="1832" y="522">☪</text></g>
      <g fill="#000" fontFamily="DejaVu Sans, sans-serif" fontWeight="700" fontSize="15"><text x="1567" y="155">ॐ</text><text x="1710" y="159">ॐ</text><text x="1882" y="390">ॐ</text></g>
      <text transform="translate(1868 150) rotate(86)" fontSize="9" fill="#5a9fc4" textLength="22">C100</text>
      <g fontSize="11" stroke="#fff" strokeOpacity="0.700" strokeWidth="1.600" style={{ paintOrder: "stroke" }}>
        {places.map(([x, y, w, s, c, it], i) => <text key={i} x={x} y={y} textLength={w} lengthAdjust="spacingAndGlyphs" fill={c} fontStyle={it ? "italic" : "normal"}>{s}</text>)}
      </g>
      <g fill="#222">
        {roadNames.map(([x1, y1, x2, y2, s, size], i) => (
          <text key={i} fontSize={size} textLength={Math.hypot(x2 - x1, y2 - y1)} lengthAdjust="spacingAndGlyphs" transform={`translate(${x1} ${y1}) rotate(${(Math.atan2(y2 - y1, x2 - x1) * 180) / Math.PI})`}>{s}</text>
        ))}
      </g>
      <g fill="none" stroke="#f00" strokeWidth="5.500" strokeLinecap="round" strokeLinejoin="round">
        {routes.map((r, i) => <path key={i} d={line(r)} />)}
      </g>
      <path d="M1472.500 486C1469 472 1460.500 468 1460.500 458a12 12 0 0 1 24 0C1484.500 468 1476 472 1472.500 486Z" fill="#2a81cb" stroke="#236fae" />
      <circle cx="1472.500" cy="458.500" r="4.500" fill="#fff" />
    </svg>
  );
}

function MapPanel() {
  return (
    <section className="relative h-[401px] w-[743px] shrink-0 overflow-hidden rounded-l border-y-2 border-l-2 border-black">
      <CityMap />
      <div className="absolute left-[10px] top-[10px] flex w-[34px] flex-col overflow-hidden rounded border-2 border-black/25 bg-white bg-clip-padding text-center font-['Liberation_Mono',monospace] text-[20px] font-bold leading-[32px] text-black">
        <span className="h-[30px] border-b border-[#ccc]">+</span>
        <span className="h-[30px]">−</span>
      </div>
      <div className="absolute bottom-0 right-0 flex h-[17px] w-[186px] items-center overflow-hidden whitespace-nowrap bg-white/80 pl-[2px] font-['Lato',sans-serif] text-[12.500px] leading-none tracking-[0.1px] text-[#333]">
        <svg width="12" height="8" className="mr-[3px] shrink-0"><path fill="#4c7be1" d="M0 0h12v4H0z" /><path fill="#ffd500" d="M0 4h12v4H0z" /></svg>
        <span className="text-[#0078a8]">Leaflet</span><span className="px-[3px]">|</span><span>©&nbsp;</span><span className="text-[#0078a8]">OpenStreetMap</span><span>&nbsp;contributors</span>
      </div>
    </section>
  );
}

/* ---------- Page ---------- */

export default function App() {
  return (
    <div className="relative flex h-[943px] w-[1907px] flex-col overflow-hidden bg-white">
      <div className="h-[5px] shrink-0 bg-[#3b3b46]" />
      <div className="flex h-[928px]">
        <div className="flex w-[1891px] overflow-hidden bg-[linear-gradient(to_right,#e8efff_1885px,#ffffff_1885px)]">
          <Sidebar />
          <main className="flex w-[1570px] shrink-0 flex-col bg-[linear-gradient(to_right,#dfe6f7,#e8efff_14px,transparent_14px)] pl-[13px] pt-8">
            <header className="flex h-[88px] w-[1535px] items-center justify-end rounded-xl bg-[#93c5fd] pr-4">
              <h1 className="flex h-14 w-[274px] items-center justify-center whitespace-nowrap rounded-lg border-4 border-[#1e40af] bg-[#dbeafe] pt-[2px] font-['Inter',sans-serif] text-2xl font-semibold tracking-[-0.18px] text-[#1e40af]">Delivery Boy Tracking</h1>
            </header>
            <div className="flex gap-[14px] pt-[14px]">
              <div className="pt-[2px]"><TableCard /></div>
              <MapPanel />
            </div>
          </main>
        </div>
        <div className="flex w-4 flex-col items-center bg-[#f1f1f1]">
          <svg width="8" height="4" className="mt-[7px]"><path d="M0 4h8L4 0z" fill="#a3a3a3" /></svg>
          <div className="mt-[6px] h-[878px] w-[13px] bg-[#c1c1c1]" />
          <svg width="8" height="4" className="mt-[22px]"><path d="M0 0h8L4 4z" fill="#505050" /></svg>
        </div>
      </div>
      <div className="flex h-[10px] items-end bg-[#f1f1f1]">
        <div className="ml-[10px] h-2 w-[1808px] bg-[#c1c1c1]" />
        <svg width="5" height="7" className="ml-[63px]"><path d="M0 0v7h3l1.500-2z" fill="#505050" /></svg>
        <div className="ml-auto h-[10px] w-4 bg-[#dcdcdc]" />
      </div>
      <div className="absolute left-[1587px] top-[854px] whitespace-nowrap font-['Open_Sans',sans-serif] text-[#b7bac4]">
        <p className="text-[19px] leading-7">Activate Windows</p>
        <p className="text-[14.400px] leading-[18px]">Go to Settings to activate Windows.</p>
      </div>
    </div>
  );
}
